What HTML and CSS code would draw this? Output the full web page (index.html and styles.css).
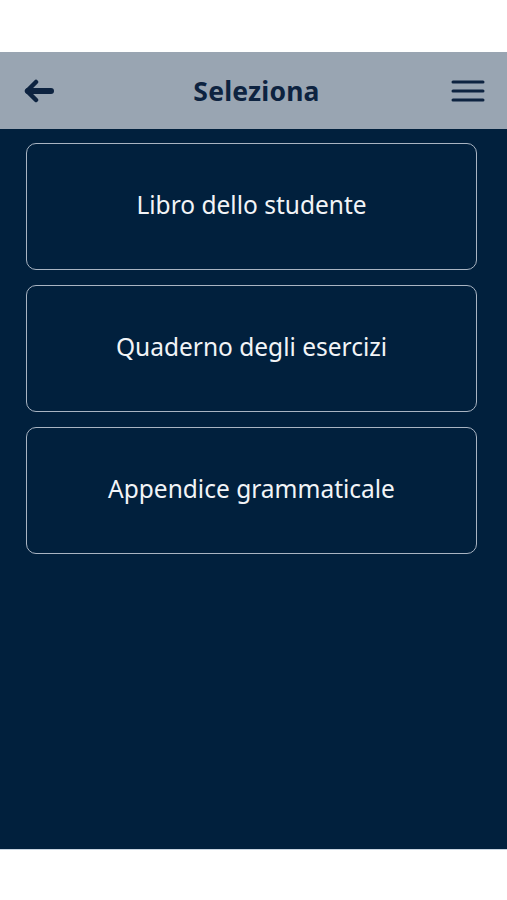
FILE: index.html
```html
<!doctype html>
<html lang="it">
<head>
<meta charset="utf-8">
<meta name="viewport" content="width=device-width, initial-scale=1">
<title>Seleziona</title>
<link rel="stylesheet" href="styles.css">
</head>
<body>

<div class="statusBar"></div>

<header class="topBar">
	<button class="iconBtn" title="Indietro">
		<svg width="30" height="24" viewBox="0 0 30 24">
			<path d="M12 3 L3 12 L12 21" fill="none" stroke="#0d2340" stroke-width="4.5" stroke-linecap="round" stroke-linejoin="round"/>
			<path d="M4 12 H27" stroke="#0d2340" stroke-width="6" stroke-linecap="round"/>
		</svg>
	</button>
	<h1 class="title">Seleziona</h1>
	<button class="iconBtn" title="Menu">
		<svg width="34" height="24" viewBox="0 0 34 24">
			<path d="M2 3 H32 M2 12 H32 M2 21 H32" stroke="#0d2340" stroke-width="3" stroke-linecap="round"/>
		</svg>
	</button>
</header>

<main class="content">
	<a class="choice" href="#">Libro dello studente</a>
	<a class="choice" href="#">Quaderno degli esercizi</a>
	<a class="choice" href="#">Appendice grammaticale</a>
</main>

<div class="bottomBar"></div>

</body>
</html>
```
FILE: styles.css
```css
* { box-sizing: border-box; }

html, body { height: 100%; }

body { margin: 0; background: #fff; font-family: "Noto Sans", "Open Sans", sans-serif; display: flex; flex-direction: column; }

.statusBar { height: 52px; background: #fff; }

.topBar { height: 77px; background: #99a5b2; display: flex; align-items: center; justify-content: space-between; padding: 0 22px 0 24px; }

.iconBtn { background: none; border: none; padding: 0; display: flex; cursor: pointer; }

.title { margin: 0 0 0 8px; font-size: 26.5px; font-weight: bold; color: #0d2340; letter-spacing: 0.2px; }

.content { height: 720px; background: #01203d; padding: 14px 30px 0 26px; display: flex; flex-direction: column; gap: 15px; }

.choice { height: 127px; border: 1.5px solid #a9b4c2; border-radius: 10px; display: flex; align-items: center; justify-content: center;
	padding-bottom: 4px; color: #f2f4f7; font-size: 24.5px; text-decoration: none; }

.bottomBar { flex: 1; background: #fff; border-top: 1px solid #c8d4e0; }
```
